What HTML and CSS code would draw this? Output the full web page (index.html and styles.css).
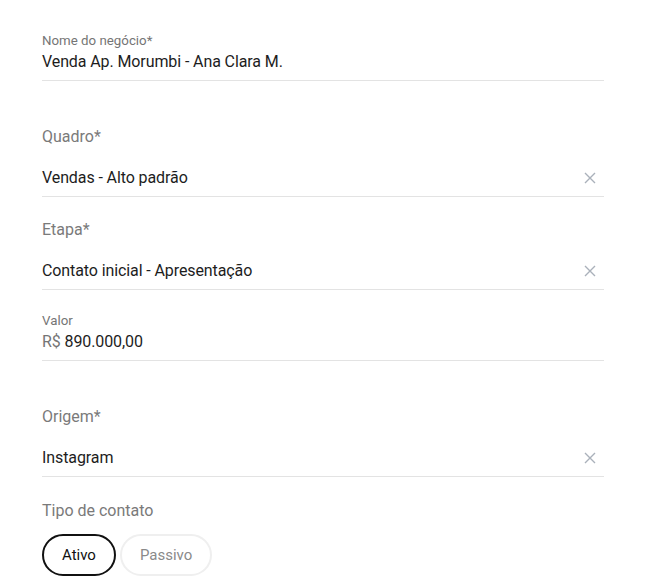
FILE: index.html
```html
<!DOCTYPE html>
<html lang="pt-BR">
<head>
  <meta charset="UTF-8">
  <meta name="viewport" content="width=device-width, initial-scale=1.0">
  <title>Negócio</title>
  <link rel="stylesheet" href="styles.css">
</head>
<body>
  <form class="deal-form">
    <div class="field field-text">
      <label class="small-label">Nome do negócio*</label>
      <div class="value">Venda Ap. Morumbi - Ana Clara M.</div>
    </div>

    <div class="field field-select">
      <label class="big-label">Quadro*</label>
      <div class="select-row">
        <span class="value">Vendas - Alto padrão</span>
        <svg class="clear" width="12" height="12" viewBox="0 0 12 12"><path d="M1 1L11 11M11 1L1 11"/></svg>
      </div>
    </div>

    <div class="field field-select">
      <label class="big-label">Etapa*</label>
      <div class="select-row">
        <span class="value">Contato inicial - Apresentação</span>
        <svg class="clear" width="12" height="12" viewBox="0 0 12 12"><path d="M1 1L11 11M11 1L1 11"/></svg>
      </div>
    </div>

    <div class="field field-text">
      <label class="small-label">Valor</label>
      <div class="value"><span class="prefix">R$</span> 890.000,00</div>
    </div>

    <div class="field field-select">
      <label class="big-label">Origem*</label>
      <div class="select-row">
        <span class="value">Instagram</span>
        <svg class="clear" width="12" height="12" viewBox="0 0 12 12"><path d="M1 1L11 11M11 1L1 11"/></svg>
      </div>
    </div>

    <div class="contact-type">
      <label class="big-label">Tipo de contato</label>
      <div class="chips">
        <button type="button" class="chip active">Ativo</button>
        <button type="button" class="chip">Passivo</button>
      </div>
    </div>
  </form>
</body>
</html>
```

FILE: styles.css
```css
body {
  font-family: Roboto, "Liberation Sans", Arial, sans-serif;
  margin: 0;
  padding: 0;
  background-color: white;
  color: #212121;
}
.deal-form {
  width: 562px;
  padding: 31px 0 0 42px;
}
.field {
  border-bottom: 1px solid #e3e3e3;
  padding-bottom: 6px;
}
.field-text {
  padding-top: 2px;
  margin-bottom: 44px;
}
.field-select {
  margin-bottom: 21px;
}
.small-label {
  display: block;
  font-size: 13.3px;
  line-height: 16px;
  color: #757575;
}
.big-label {
  display: block;
  font-size: 16px;
  line-height: 24px;
  color: #7a7a7a;
}
.value {
  font-size: 16px;
  line-height: 24px;
  letter-spacing: -0.1px;
  color: #1d1d1d;
}
.field-text .value {
  margin-top: 1px;
}
.prefix {
  color: #757575;
}
.select-row {
  display: flex;
  align-items: center;
  justify-content: space-between;
  margin-top: 17px;
}
.clear {
  margin-right: 8px;
  stroke: #aab1ba;
  stroke-width: 1.4;
  fill: none;
}
.contact-type {
  padding-top: 1px;
}
.chips {
  display: flex;
  gap: 4px;
  margin-top: 11px;
}
.chip {
  font-family: inherit;
  font-size: 15px;
  height: 42px;
  padding: 0 18px;
  border-radius: 21px;
  background-color: white;
  border: 2px solid #efefef;
  color: #8a8a8a;
  cursor: pointer;
}
.chip.active {
  border-color: #111;
  color: #111;
}
```
